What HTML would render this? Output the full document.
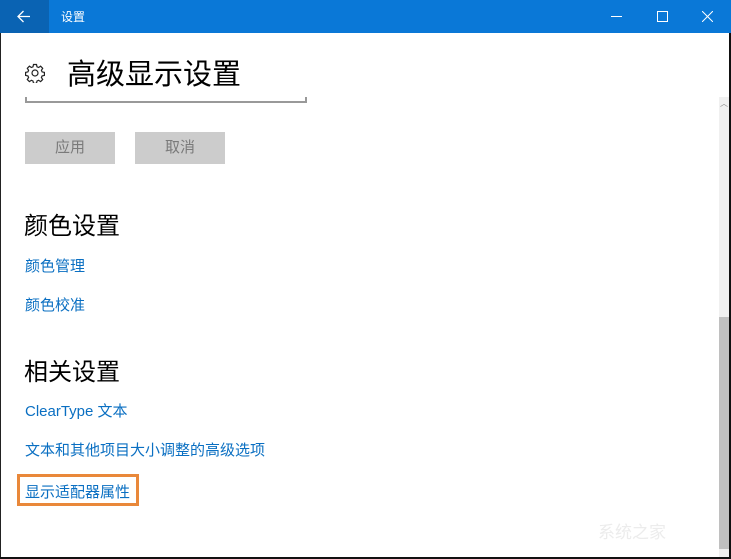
<!DOCTYPE html>
<html><head><meta charset="utf-8"><style>
body{margin:0;width:731px;height:559px;overflow:hidden;background:#fff;font-family:"Liberation Sans","Microsoft YaHei","Noto Sans CJK SC",sans-serif;position:relative}
.a{position:absolute}
.link{color:#0a6fc2;font-size:15px;position:absolute;left:25px;white-space:nowrap}
h2{position:absolute;left:24px;margin:0;font-size:24px;font-weight:normal;color:#000}
.btn{position:absolute;top:132px;width:90px;height:32px;background:#cccccc;color:#7a7a7a;font-size:15px;text-align:center;line-height:32px}
</style></head><body>
<div class="a" style="left:0;top:0;width:731px;height:33px;background:#0a78d7"></div>
<div class="a" style="left:0;top:0;width:49px;height:33px;background:#0a63b3"></div>
<svg class="a" style="left:17px;top:10px" width="14" height="13"><path d="M1 6.5H13M6.5 1L1 6.5L6.5 12" stroke="#fff" stroke-width="1.3" fill="none"/></svg>
<div class="a" style="left:61px;top:8px;color:#fff;font-size:12px">设置</div>
<div class="a" style="left:611px;top:16px;width:11px;height:1px;background:#fff"></div>
<div class="a" style="left:657px;top:11px;width:9px;height:9px;border:1px solid #fff"></div>
<svg class="a" style="left:702px;top:11px" width="11" height="11"><path d="M0 0L11 11M11 0L0 11" stroke="#fff" stroke-width="1"/></svg>
<div class="a" style="left:0;top:33px;width:1px;height:526px;background:#222"></div>
<div class="a" style="left:729px;top:33px;width:2px;height:526px;background:#111"></div>
<div class="a" style="left:0;top:557px;width:731px;height:2px;background:#111"></div>
<div class="a" style="left:719px;top:97px;width:10px;height:460px;background:#f0f0f0"></div>
<div class="a" style="left:719px;top:317px;width:10px;height:232px;background:#c0c0c0"></div>
<div class="a" style="left:720px;top:98px;font-size:8px;color:#888">︿</div>
<svg class="a" style="left:25px;top:63px" width="20" height="20" viewBox="0 0 20 20"><g fill="none" stroke="#222" stroke-width="1.2"><circle cx="10" cy="10" r="3"/><path d="M8.5 1.5h3l.5 2.3 1.6.7 2-1.3 2.1 2.1-1.3 2 .7 1.6 2.3.5v3l-2.3.5-.7 1.6 1.3 2-2.1 2.1-2-1.3-1.6.7-.5 2.3h-3l-.5-2.3-1.6-.7-2 1.3-2.1-2.1 1.3-2-.7-1.6-2.3-.5v-3l2.3-.5.7-1.6-1.3-2 2.1-2.1 2 1.3 1.6-.7z"/></g></svg>
<div class="a" style="left:67px;top:51px;font-size:29px;color:#000">高级显示设置</div>
<div class="a" style="left:25px;top:97px;width:278px;height:4px;border:2px solid #999;border-top:none"></div>
<div class="btn" style="left:25px">应用</div>
<div class="btn" style="left:135px">取消</div>
<h2 style="top:206px">颜色设置</h2>
<div class="link" style="top:255px">颜色管理</div>
<div class="link" style="top:294px">颜色校准</div>
<h2 style="top:352px">相关设置</h2>
<div class="link" style="top:400px">ClearType 文本</div>
<div class="link" style="top:439px">文本和其他项目大小调整的高级选项</div>
<div class="a" style="left:17px;top:474px;width:116px;height:26px;border:3px solid #e9883a"></div>
<div class="link" style="top:481px">显示适配器属性</div>
<div class="a" style="left:598px;top:518px;font-size:17px;color:#ececec">系统之家</div>
</body></html>
